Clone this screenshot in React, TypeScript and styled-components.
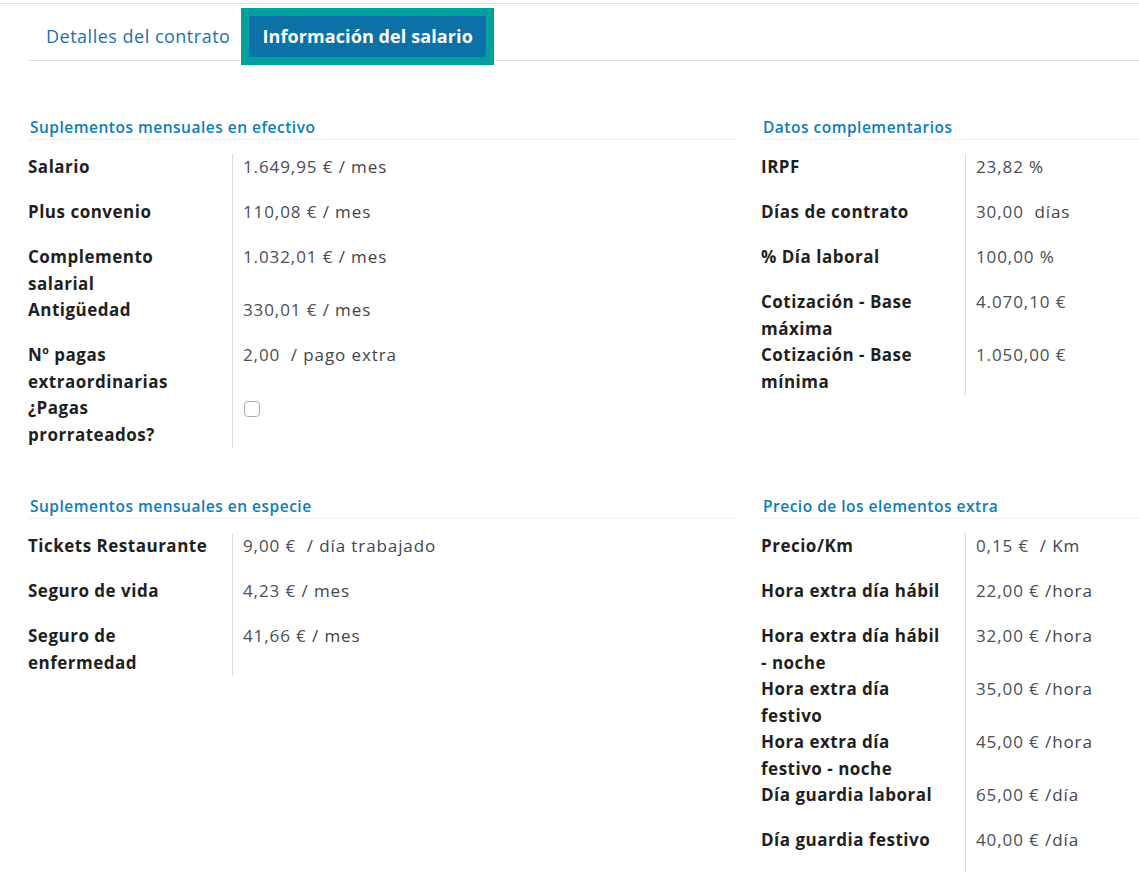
import React from "react";
import styled, { createGlobalStyle } from "styled-components";

const GlobalStyle = createGlobalStyle`
  html, body { margin: 0; padding: 0; background: #ffffff; }
  body {
    font-family: "Open Sans", "Noto Sans", "DejaVu Sans", sans-serif;
    color: #1f2328;
    overflow: hidden;
  }
  * { box-sizing: border-box; }
`;

const Page = styled.div`
  width: 1139px;
  padding-top: 3px;
`;

const TopRule = styled.div`
  border-top: 1px solid #e1e1e1;
`;

const TabBar = styled.nav`
  display: flex;
  align-items: flex-start;
  margin-left: 28px;
  height: 57px;
  border-bottom: 1px solid #e0e0e0;
`;

const Tab = styled.div<{ $active?: boolean }>`
  font-size: 18px;
  line-height: 41px;
  white-space: nowrap;
  ${(p) =>
    p.$active
      ? `
    margin-top: 4px;
    height: 57px;
    padding: 0 13px;
    border: 8px solid #00a19d;
    background: #0b71a7;
    color: #ffffff;
    font-weight: 700;
    letter-spacing: 0.1px;
  `
      : `
    margin-top: 12px;
    padding: 0 11px 0 18px;
    color: #1b72b0;
    font-weight: 400;
    letter-spacing: 0.5px;
  `}
`;

const Content = styled.div`
  display: grid;
  grid-template-columns: 707px 1fr;
  column-gap: 26px;
  row-gap: 48px;
  padding: 56px 0 0 28px;
`;

const Group = styled.section``;

const GroupTitle = styled.h3`
  margin: 0 0 14px;
  padding: 0 0 2px 2px;
  font-size: 15.5px;
  line-height: 20px;
  font-weight: 600;
  letter-spacing: 0.5px;
  color: #0d7cbd;
  border-bottom: 1px solid #eeeeee;
`;

const Rows = styled.div`
  display: grid;
  grid-template-columns: 204px 1fr;
`;

const Label = styled.div`
  font-size: 17px;
  line-height: 26.5px;
  font-weight: 700;
  letter-spacing: 0.5px;
  color: #1f1f1f;
  padding-right: 16px;
`;

const Value = styled.div`
  border-left: 1px solid #dcdcdc;
  padding: 0 0 18.5px 10px;
  font-size: 17px;
  line-height: 26.5px;
  letter-spacing: 0.9px;
  color: #4a4e58;
  white-space: pre;
`;

const Unit = styled.span`
  color: #3f444b;
`;

const Checkbox = styled.span`
  display: inline-block;
  width: 16px;
  height: 16px;
  margin: 6px 0 0 1px;
  border: 1px solid #a9adb5;
  border-radius: 4px;
  background: #fff;
  vertical-align: top;
`;

type Row = { label: string; value?: string; unit?: string; checkbox?: boolean };

const groups: { title: string; rows: Row[] }[] = [
  {
    title: "Suplementos mensuales en efectivo",
    rows: [
      { label: "Salario", value: "1.649,95 €", unit: " / mes" },
      { label: "Plus convenio", value: "110,08 €", unit: " / mes" },
      { label: "Complemento salarial", value: "1.032,01 €", unit: " / mes" },
      { label: "Antigüedad", value: "330,01 €", unit: " / mes" },
      { label: "Nº pagas extraordinarias", value: "2,00", unit: "  / pago extra" },
      { label: "¿Pagas prorrateados?", checkbox: true },
    ],
  },
  {
    title: "Datos complementarios",
    rows: [
      { label: "IRPF", value: "23,82", unit: " %" },
      { label: "Días de contrato", value: "30,00", unit: "  días" },
      { label: "% Día laboral", value: "100,00", unit: " %" },
      { label: "Cotización - Base máxima", value: "4.070,10 €" },
      { label: "Cotización - Base mínima", value: "1.050,00 €" },
    ],
  },
  {
    title: "Suplementos mensuales en especie",
    rows: [
      { label: "Tickets Restaurante", value: "9,00 €", unit: "  / día trabajado" },
      { label: "Seguro de vida", value: "4,23 €", unit: " / mes" },
      { label: "Seguro de enfermedad", value: "41,66 €", unit: " / mes" },
    ],
  },
  {
    title: "Precio de los elementos extra",
    rows: [
      { label: "Precio/Km", value: "0,15 €", unit: "  / Km" },
      { label: "Hora extra día hábil", value: "22,00 €", unit: " /hora" },
      { label: "Hora extra día hábil - noche", value: "32,00 €", unit: " /hora" },
      { label: "Hora extra día festivo", value: "35,00 €", unit: " /hora" },
      { label: "Hora extra día festivo - noche", value: "45,00 €", unit: " /hora" },
      { label: "Día guardia laboral", value: "65,00 €", unit: " /día" },
      { label: "Día guardia festivo", value: "40,00 €", unit: " /día" },
    ],
  },
];

export default function App() {
  return (
    <Page>
      <GlobalStyle />
      <TopRule />
      <TabBar>
        <Tab>Detalles del contrato</Tab>
        <Tab $active>Información del salario</Tab>
      </TabBar>
      <Content>
        {groups.map((g) => (
          <Group key={g.title}>
            <GroupTitle>{g.title}</GroupTitle>
            <Rows>
              {g.rows.map((r) => (
                <React.Fragment key={r.label}>
                  <Label>{r.label}</Label>
                  <Value>
                    {r.checkbox ? (
                      <Checkbox />
                    ) : (
                      <>
                        {r.value}
                        {r.unit && <Unit>{r.unit}</Unit>}
                      </>
                    )}
                  </Value>
                </React.Fragment>
              ))}
            </Rows>
          </Group>
        ))}
      </Content>
    </Page>
  );
}
